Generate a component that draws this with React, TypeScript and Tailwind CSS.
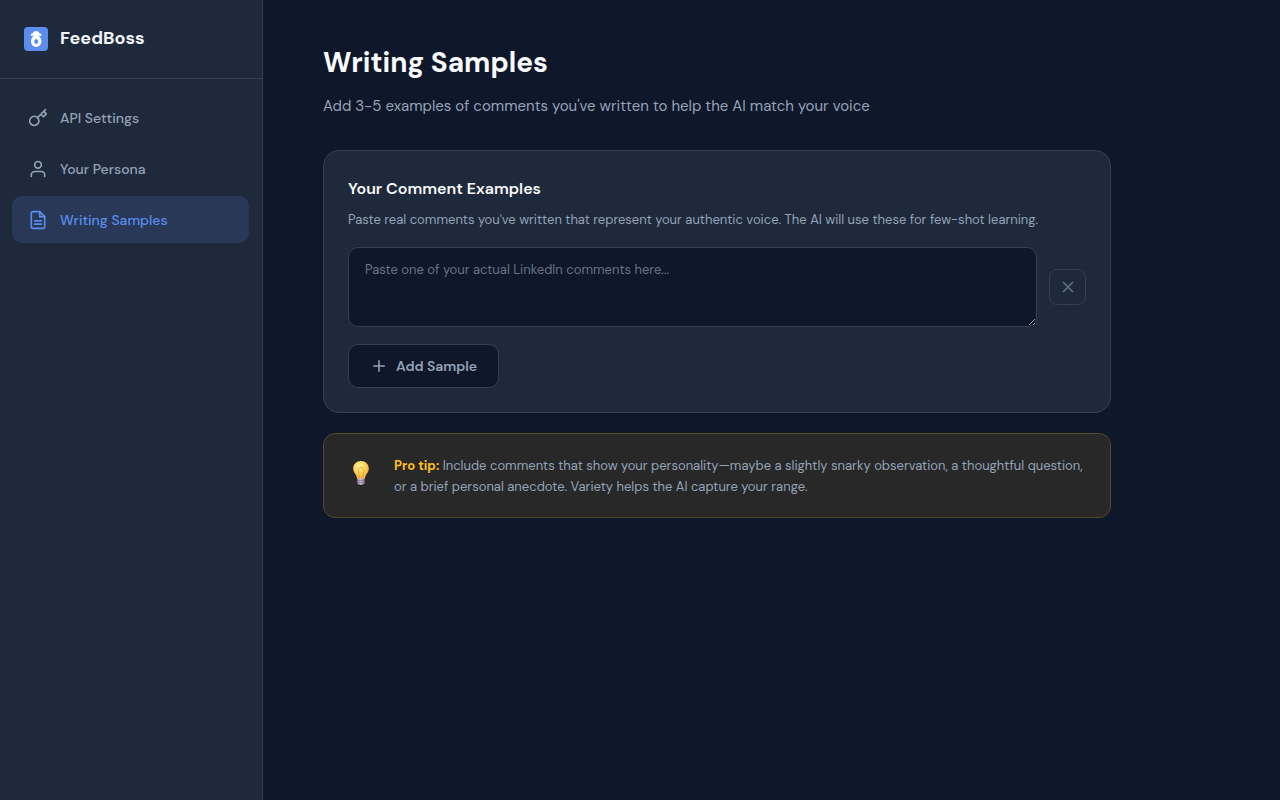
import { useState } from "react";
import type { ReactNode } from "react";

function Icon({ size = 20, children }: { size?: number; children: ReactNode }) {
  return (
    <svg
      width={size}
      height={size}
      viewBox="0 0 24 24"
      fill="none"
      stroke="currentColor"
      strokeWidth="2"
      strokeLinecap="round"
      strokeLinejoin="round"
      className="shrink-0"
      aria-hidden="true"
    >
      {children}
    </svg>
  );
}

function Logo() {
  return (
    <svg width="24" height="24" viewBox="0 0 24 24" className="shrink-0" aria-hidden="true">
      <rect width="24" height="24" rx="4" fill="#5b8def" />
      <path
        d="M6.800 8.800V8c0-1 1-1.800 2-1.800C9.300 4.900 10.600 4 12.200 4s2.700.9 3.200 2.200c1 0 2.200.8 2.200 1.800v.8z"
        fill="#fff"
      />
      <path
        fillRule="evenodd"
        d="M12.200 8.300c3 0 5.200 2.700 5.200 6s-2.200 5.700-5.200 5.700S7 17.600 7 14.300s2.200-6 5.200-6zm0 3.600c-1.200 0-1.900 1.100-1.900 2.500s.7 2.500 1.900 2.500 1.900-1.100 1.900-2.500-.7-2.500-1.900-2.500z"
        fill="#fff"
      />
    </svg>
  );
}

function Bulb() {
  return (
    <svg width="26" height="26" viewBox="0 0 26 26" className="shrink-0" aria-hidden="true">
      <defs>
        <radialGradient id="bulb-glass" cx=".4" cy=".3" r=".75">
          <stop offset="0" stopColor="#fff3a4" />
          <stop offset=".45" stopColor="#ffd65c" />
          <stop offset="1" stopColor="#f2a83c" />
        </radialGradient>
        <linearGradient id="bulb-base" x1="0" x2="1">
          <stop offset="0" stopColor="#9b8eac" />
          <stop offset=".5" stopColor="#d8cbe2" />
          <stop offset="1" stopColor="#7a6b8c" />
        </linearGradient>
      </defs>
      <path
        d="M13 1C8.500 1 5.200 4.200 5.200 8.600c0 4.400 3.400 5.500 3.900 10.400h7.800c.5-4.900 3.900-6 3.900-10.400C20.800 4.200 17.500 1 13 1z"
        fill="url(#bulb-glass)"
      />
      <path
        d="M11.500 18.500 10.300 11c-.4-2.200 1-3.500 2.700-3.500s3.100 1.300 2.700 3.500l-1.200 7.500"
        fill="none"
        stroke="#e79a32"
        strokeWidth=".8"
      />
      <path d="M9.300 18.500h7.400v4.300c0 1-1.300 2-3.700 2s-3.700-1-3.700-2z" fill="url(#bulb-base)" />
      <path d="M9.300 20.600l7.400-.5M9.300 22.700l7.400-.5" stroke="#6d5e80" strokeWidth=".7" />
    </svg>
  );
}

const navItems = [
  {
    label: "API Settings",
    active: false,
    icon: (
      <path d="M21 2l-2 2m-7.610 7.610a5.500 5.500 0 1 1-7.778 7.778 5.500 5.500 0 0 1 7.777-7.777zm0 0L15.500 7.500m0 0l3 3L22 7l-3-3m-3.500 3.500L19 4" />
    ),
  },
  {
    label: "Your Persona",
    active: false,
    icon: (
      <>
        <path d="M20 21v-2a4 4 0 0 0-4-4H8a4 4 0 0 0-4 4v2" />
        <circle cx="12" cy="7" r="4" />
      </>
    ),
  },
  {
    label: "Writing Samples",
    active: true,
    icon: (
      <>
        <path d="M14 2H6a2 2 0 0 0-2 2v16a2 2 0 0 0 2 2h12a2 2 0 0 0 2-2V8z" />
        <path d="M14 2v6h6M16 13H8M16 17H8" />
      </>
    ),
  },
];

function Sidebar() {
  return (
    <aside className="w-[263px] shrink-0 border-r border-[#334155] bg-[#1e293b]">
      <div className="flex h-[79px] items-center gap-3 border-b border-[#334155] px-6">
        <Logo />
        <span className="pb-0.5 text-lg leading-6 font-bold text-[#f1f5f9]">FeedBoss</span>
      </div>
      <nav className="flex flex-col gap-1 py-[15px] pr-[13px] pl-3">
        {navItems.map((item) => (
          <a
            key={item.label}
            href="#"
            aria-current={item.active ? "page" : undefined}
            className={
              item.active
                ? "flex h-[47px] items-center gap-3 rounded-[10px] bg-[#283856] px-4 text-sm font-medium text-[#5b8def]"
                : "flex h-[47px] items-center gap-3 rounded-[10px] px-4 text-sm font-medium text-[#94a3b8]"
            }
          >
            <Icon>{item.icon}</Icon>
            {item.label}
          </a>
        ))}
      </nav>
    </aside>
  );
}

export default function App() {
  const [samples, setSamples] = useState([{ id: 1, text: "" }]);

  const addSample = () => setSamples((list) => [...list, { id: Date.now(), text: "" }]);
  const removeSample = (id: number) => setSamples((list) => list.filter((s) => s.id !== id));
  const updateSample = (id: number, text: string) =>
    setSamples((list) => list.map((s) => (s.id === id ? { ...s, text } : s)));

  return (
    <div className="flex min-h-screen bg-[#0f172a] font-['DM_Sans',Inter,sans-serif] text-[#94a3b8]">
      <Sidebar />
      <main className="min-w-0 flex-1 px-[60px] py-10">
        <div className="max-w-[788px]">
          <h1 className="text-[28px] leading-[46px] font-bold text-[#f8fafc]">Writing Samples</h1>
          <p className="mt-2 text-[15px] leading-6">
            Add 3-5 examples of comments you've written to help the AI match your voice
          </p>

          <section className="mt-8 rounded-2xl border border-[#334155] bg-[#1e293b] p-6">
            <h2 className="text-base leading-7 font-semibold text-[#f8fafc]">
              Your Comment Examples
            </h2>
            <p className="mt-1.5 text-[13px] leading-[22px]">
              Paste real comments you've written that represent your authentic voice. The AI will
              use these for few-shot learning.
            </p>
            <div className="mt-4 flex flex-col gap-3">
              {samples.map((sample) => (
                <div key={sample.id} className="flex items-center gap-3">
                  <textarea
                    aria-label="Comment sample"
                    value={sample.text}
                    onChange={(e) => updateSample(sample.id, e.target.value)}
                    placeholder="Paste one of your actual LinkedIn comments here..."
                    className="block h-20 min-w-0 flex-1 resize-y rounded-[10px] border border-[#334155] bg-[#0f172a] px-4 py-3 text-[13px] leading-5 text-[#f1f5f9] outline-none placeholder:text-[#64748b]"
                  />
                  <button
                    type="button"
                    aria-label="Remove sample"
                    onClick={() => removeSample(sample.id)}
                    className="flex h-9 w-[37px] shrink-0 items-center justify-center rounded-lg border border-[#334155] text-[#64748b]"
                  >
                    <Icon size={18}>
                      <path d="M18 6 6 18M6 6l12 12" />
                    </Icon>
                  </button>
                </div>
              ))}
            </div>
            <button
              type="button"
              onClick={addSample}
              className="mt-[17px] flex h-11 items-center gap-2 rounded-[10px] border border-[#334155] bg-[#0f172a] px-[21px] text-sm font-semibold"
            >
              <Icon size={18}>
                <path d="M12 5v14M5 12h14" />
              </Icon>
              Add Sample
            </button>
          </section>

          <aside className="mt-5 flex items-start gap-5 rounded-xl border border-[#544827] bg-[#282829] pt-[21px] pr-4 pb-5 pl-6">
            <span className="pt-[5px]">
              <Bulb />
            </span>
            <p className="text-[13px] leading-[21px]">
              <strong className="font-bold text-[#fbbf24]">Pro tip:</strong> Include comments that
              show your personality—maybe a slightly snarky observation, a thoughtful question, or a
              brief personal anecdote. Variety helps the AI capture your range.
            </p>
          </aside>
        </div>
      </main>
    </div>
  );
}
